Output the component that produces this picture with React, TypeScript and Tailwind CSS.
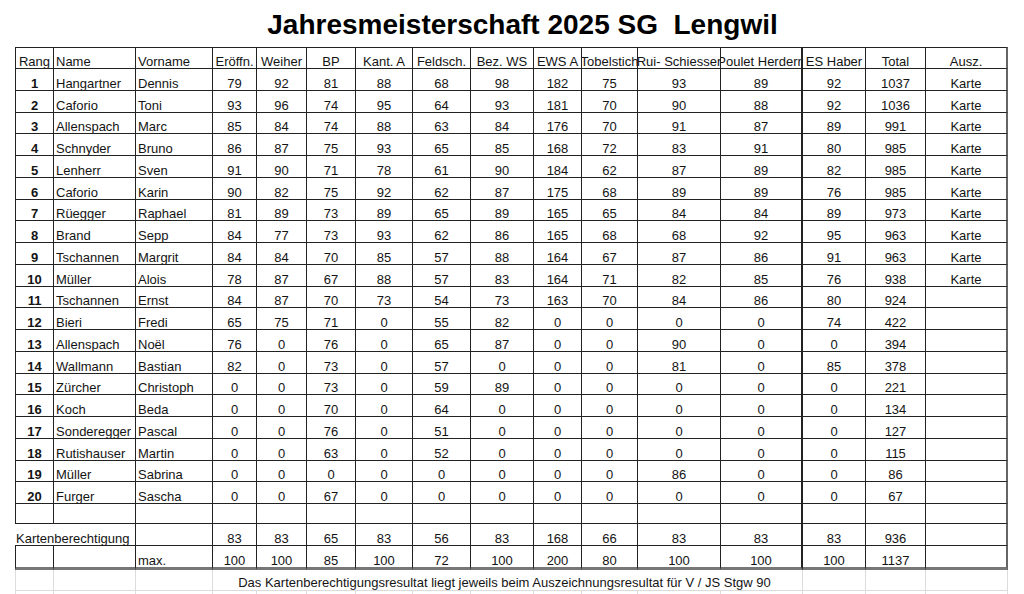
import React from "react";

const COLS =
  "grid grid-cols-[39px_82px_77px_44px_50px_49px_57px_58px_63px_48px_56px_83px_82px_63px_60px_82px]";

const rows: (string | number)[][] = [
  [1, "Hangartner", "Dennis", 79, 92, 81, 88, 68, 98, 182, 75, 93, 89, 92, 1037, "Karte"],
  [2, "Caforio", "Toni", 93, 96, 74, 95, 64, 93, 181, 70, 90, 88, 92, 1036, "Karte"],
  [3, "Allenspach", "Marc", 85, 84, 74, 88, 63, 84, 176, 70, 91, 87, 89, 991, "Karte"],
  [4, "Schnyder", "Bruno", 86, 87, 75, 93, 65, 85, 168, 72, 83, 91, 80, 985, "Karte"],
  [5, "Lenherr", "Sven", 91, 90, 71, 78, 61, 90, 184, 62, 87, 89, 82, 985, "Karte"],
  [6, "Caforio", "Karin", 90, 82, 75, 92, 62, 87, 175, 68, 89, 89, 76, 985, "Karte"],
  [7, "Rüegger", "Raphael", 81, 89, 73, 89, 65, 89, 165, 65, 84, 84, 89, 973, "Karte"],
  [8, "Brand", "Sepp", 84, 77, 73, 93, 62, 86, 165, 68, 68, 92, 95, 963, "Karte"],
  [9, "Tschannen", "Margrit", 84, 84, 70, 85, 57, 88, 164, 67, 87, 86, 91, 963, "Karte"],
  [10, "Müller", "Alois", 78, 87, 67, 88, 57, 83, 164, 71, 82, 85, 76, 938, "Karte"],
  [11, "Tschannen", "Ernst", 84, 87, 70, 73, 54, 73, 163, 70, 84, 86, 80, 924, ""],
  [12, "Bieri", "Fredi", 65, 75, 71, 0, 55, 82, 0, 0, 0, 0, 74, 422, ""],
  [13, "Allenspach", "Noël", 76, 0, 76, 0, 65, 87, 0, 0, 90, 0, 0, 394, ""],
  [14, "Wallmann", "Bastian", 82, 0, 73, 0, 57, 0, 0, 0, 81, 0, 85, 378, ""],
  [15, "Zürcher", "Christoph", 0, 0, 73, 0, 59, 89, 0, 0, 0, 0, 0, 221, ""],
  [16, "Koch", "Beda", 0, 0, 70, 0, 64, 0, 0, 0, 0, 0, 0, 134, ""],
  [17, "Sonderegger", "Pascal", 0, 0, 76, 0, 51, 0, 0, 0, 0, 0, 0, 127, ""],
  [18, "Rutishauser", "Martin", 0, 0, 63, 0, 52, 0, 0, 0, 0, 0, 0, 115, ""],
  [19, "Müller", "Sabrina", 0, 0, 0, 0, 0, 0, 0, 0, 86, 0, 0, 86, ""],
  [20, "Furger", "Sascha", 0, 0, 67, 0, 0, 0, 0, 0, 0, 0, 0, 67, ""],
];

const headers = [
  "Rang",
  "Name",
  "Vorname",
  "Eröffn.",
  "Weiher",
  "BP",
  "Kant. A",
  "Feldsch.",
  "Bez. WS",
  "EWS A",
  "Tobelstich",
  "Rui- Schiesser",
  "Poulet Herdern",
  "ES Haber",
  "Total",
  "Ausz.",
];

const karten = [83, 83, 65, 83, 56, 83, 168, 66, 83, 83, 83, 936];
const maxRow = [100, 100, 85, 100, 72, 100, 200, 80, 100, 100, 100, 1137];

function cellBorder(i: number) {
  if (i === 0) return "border-l border-r border-b border-[#222]";
  if (i === 12) return "border-r-2 border-b border-[#222]";
  if (i === 15) return "border-r-2 border-b border-r-[#666] border-b-[#222]";
  return "border-r border-b border-[#222]";
}

function Cell({
  i,
  children,
  align,
  bold,
  extra,
}: {
  i: number;
  children?: React.ReactNode;
  align: "left" | "center";
  bold?: boolean;
  extra?: string;
}) {
  return (
    <div
      className={
        "flex items-end overflow-hidden whitespace-nowrap leading-[12px] " +
        cellBorder(i) +
        " " +
        (align === "center" ? "justify-center" : "justify-start pl-[2px]") +
        (bold ? " font-bold" : "") +
        (extra ? " " + extra : "")
      }
    >
      <span className="shrink-0">{children}</span>
    </div>
  );
}

export default function App() {
  return (
    <div
      className="w-[1024px] h-[594px] overflow-hidden bg-white text-[#141414]"
      style={{ fontFamily: '"Liberation Sans", Arial, sans-serif' }}
    >
      <div className="pl-[15px]">
        <div className="w-[993px] h-[47px] pt-[11px] pl-[22px] text-center">
          <h1 className="text-[28px] leading-[28px] font-bold whitespace-pre text-black">
            {"Jahresmeisterschaft 2025 SG  Lengwil"}
          </h1>
        </div>

        <div className="w-[993px] text-[13px]">
          {/* header */}
          <div className={COLS + " h-[22px]"}>
            {headers.map((h, i) => (
              <Cell
                key={h}
                i={i}
                align={i === 1 || i === 2 ? "left" : "center"}
                extra="border-t border-t-[#222]"
              >
                {h}
              </Cell>
            ))}
          </div>

          {rows.map((r, ri) => (
            <div key={ri} className={COLS + " h-[21.75px]"}>
              {r.map((v, i) => (
                <Cell
                  key={i}
                  i={i}
                  align={i === 1 || i === 2 ? "left" : "center"}
                  bold={i === 0}
                >
                  {v}
                </Cell>
              ))}
            </div>
          ))}

          {/* empty row */}
          <div className={COLS + " h-[20px]"}>
            {headers.map((_, i) => (
              <Cell key={i} i={i} align="center" />
            ))}
          </div>

          {/* Kartenberechtigung */}
          <div className={COLS + " h-[22px]"}>
            <div className="col-span-2 flex items-end whitespace-nowrap leading-[12px] border-r border-b border-[#222] pl-[1px]">
              Kartenberechtigung
            </div>
            <Cell i={2} align="left" />
            {karten.map((v, k) => (
              <Cell key={k} i={k + 3} align="center">
                {v}
              </Cell>
            ))}
            <Cell i={15} align="center" />
          </div>

          {/* max row */}
          <div className={COLS + " h-[24px]"}>
            {headers.map((_, i) => {
              let content: React.ReactNode = null;
              if (i === 2) content = "max.";
              if (i >= 3 && i <= 14) content = maxRow[i - 3];
              return (
                <Cell
                  key={i}
                  i={i}
                  align={i === 2 ? "left" : "center"}
                  extra="border-b-[3px] border-b-[#777]"
                >
                  {content}
                </Cell>
              );
            })}
          </div>

          {/* footer note with light gridlines */}
          <div className={COLS + " h-[21px]"}>
            <div className="border-l border-r border-b border-[#dcdcdc]" />
            <div className="border-r border-b border-[#dcdcdc]" />
            <div className="border-r border-b border-[#dcdcdc]" />
            <div className="col-span-10 flex items-end justify-center whitespace-nowrap leading-[12px] border-r border-b border-[#dcdcdc] pr-[6px] pb-[1px]">
              Das Kartenberechtigungsresultat liegt jeweils beim Auszeichnungsresultat für V / JS Stgw 90
            </div>
            <div className="border-r border-b border-[#dcdcdc]" />
            <div className="border-r border-b border-[#dcdcdc]" />
            <div className="border-r border-b border-[#dcdcdc]" />
          </div>
          <div className={COLS + " h-[10px]"}>
            {headers.map((_, i) => (
              <div
                key={i}
                className={
                  "border-r border-[#dcdcdc]" + (i === 0 ? " border-l" : "")
                }
              />
            ))}
          </div>
        </div>
      </div>
    </div>
  );
}
